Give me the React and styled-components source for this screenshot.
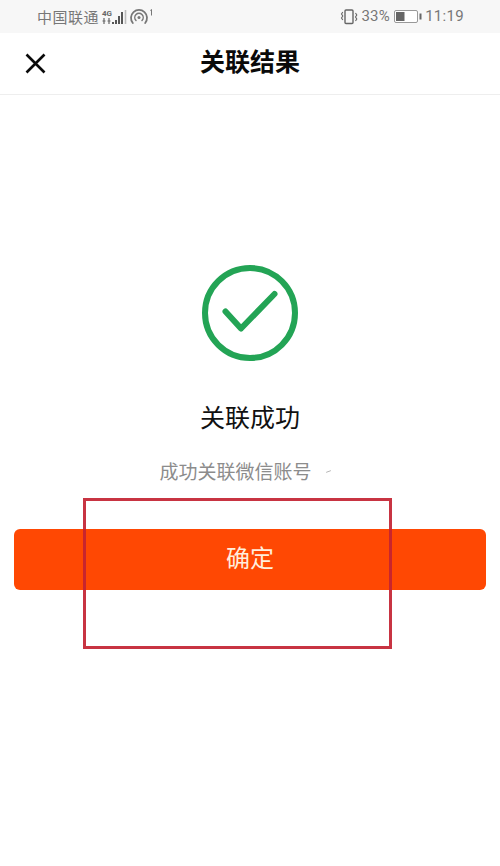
import React from "react";
import styled, { createGlobalStyle } from "styled-components";

const Global = createGlobalStyle`
  html, body { margin: 0; padding: 0; background: #fff; }
  body { font-family: "Noto Sans CJK SC", "Liberation Sans", sans-serif; }
`;

const Page = styled.div`
  position: relative;
  width: 500px;
  height: 866px;
  overflow: hidden;
  background: #fff;
  display: flex;
  flex-direction: column;
`;

const StatusBar = styled.div`
  height: 33px;
  background: #f7f7f7;
  display: flex;
  align-items: center;
  justify-content: space-between;
  padding: 0 36px 0 37px;
  color: #777;
  font-size: 15px;
`;

const StatusGroup = styled.div`
  display: flex;
  align-items: center;
  gap: ${(p) => p.$gap || 2}px;
`;

const Carrier = styled.span`
  line-height: 1;
  letter-spacing: 0.5px;
`;

const StatusText = styled.span`
  font-family: "Roboto", sans-serif;
  font-size: 15px;
  letter-spacing: 0.3px;
  line-height: 1;
  color: #777;
  margin-right: ${(p) => p.$after || 0}px;
`;

const NavBar = styled.div`
  height: 61px;
  display: grid;
  grid-template-columns: 70px 1fr 70px;
  align-items: center;
  border-bottom: 1px solid #eeeeee;
`;

const CloseButton = styled.div`
  display: flex;
  align-items: center;
  padding-left: 25px;
`;

const NavTitle = styled.div`
  text-align: center;
  font-size: 25px;
  font-weight: 700;
  color: #0a0a0a;
  line-height: 1;
  position: relative;
  top: -3px;
`;

const Content = styled.div`
  display: flex;
  flex-direction: column;
  align-items: center;
  padding-top: 169px;
`;

const ResultTitle = styled.div`
  margin-top: 37px;
  font-size: 25px;
  line-height: 34px;
  color: #111;
`;

const AccountRow = styled.div`
  margin-top: 25px;
  display: flex;
  align-items: center;
  font-size: 19px;
  line-height: 26px;
  color: #8c8c8c;
  gap: 14px;
  padding-right: 10px;
`;

const RedactedMark = styled.span`
  display: block;
  width: 5px;
  height: 1px;
  background: #aaa;
  transform: rotate(-20deg);
`;

const ConfirmButton = styled.button`
  margin: 45px 14px 0;
  align-self: stretch;
  height: 61px;
  border: none;
  border-radius: 6px;
  background: #ff4803;
  color: #ffeedd;
  font-family: inherit;
  font-size: 24px;
  padding: 0 0 7px;
`;

const Highlight = styled.div`
  position: absolute;
  left: 83px;
  top: 498px;
  width: 309px;
  height: 151px;
  box-sizing: border-box;
  border: 3px solid rgba(195, 35, 50, 0.92);
  pointer-events: none;
`;

const Signal = () => (
  <svg width="26" height="18" viewBox="0 0 26 18" fill="none">
    <text x="1" y="7.5" fontFamily="Roboto, sans-serif" fontSize="8" fontWeight="700" fill="#666">4G</text>
    <path d="M3 10v6M1.5 13h3M8 10v6M6.5 13h3" stroke="#666" strokeWidth="1.2" />
    <path d="M12 14v2M15 12v4M18 8v8M21 4v12" stroke="#555" strokeWidth="2" />
    <path d="M24.5 2v14" stroke="#bbb" strokeWidth="1.6" />
  </svg>
);

const Hotspot = () => (
  <svg width="25" height="18" viewBox="0 0 25 18" fill="none">
    <path d="M3.8 15a8 8 0 1 1 12.4 0" stroke="#777" strokeWidth="1.8" strokeLinecap="round" />
    <path d="M7 12.5a4.2 4.2 0 1 1 6 0" stroke="#777" strokeWidth="1.5" strokeLinecap="round" />
    <circle cx="10" cy="9.5" r="1.5" fill="#777" />
    <path d="M22.5 1.5v6M21.3 2.5l1.2-1" stroke="#777" strokeWidth="1" />
  </svg>
);

const Vibrate = () => (
  <svg width="18" height="16" viewBox="0 0 18 16" fill="none">
    <rect x="5" y="1" width="8" height="13.5" rx="1" stroke="#666" strokeWidth="1.4" />
    <path d="M2.8 3l-1.3 2 1.3 2-1.3 2 1.3 2" stroke="#666" strokeWidth="1.1" />
    <path d="M15.5 4l1.3 2-1.3 2 1.3 2-1.3 2" stroke="#666" strokeWidth="1.1" />
  </svg>
);

const Battery = () => (
  <svg width="28" height="13" viewBox="0 0 28 13" fill="none">
    <rect x="0.5" y="0.5" width="23" height="12" rx="1.5" fill="#fff" stroke="#999" />
    <rect x="2" y="2" width="8.5" height="9" fill="#666" />
    <rect x="25.5" y="3.5" width="2" height="6" fill="#666" />
  </svg>
);

const CloseIcon = () => (
  <svg width="21" height="21" viewBox="0 0 21 21" fill="none">
    <path d="M1.5 1.5l18 18M19.5 1.5l-18 18" stroke="#0a0a0a" strokeWidth="2.6" />
  </svg>
);

const CheckIcon = () => (
  <svg width="98" height="98" viewBox="0 0 98 98" fill="none">
    <circle cx="49" cy="49" r="45" stroke="#23a455" strokeWidth="6" />
    <path d="M24.5 47.5L40 64.5L73.5 30" stroke="#23a455" strokeWidth="6" strokeLinecap="round" strokeLinejoin="round" />
  </svg>
);

export default function App() {
  return (
    <>
      <Global />
      <Page>
        <StatusBar>
          <StatusGroup $gap={2}>
            <Carrier>中国联通</Carrier>
            <Signal />
            <Hotspot />
          </StatusGroup>
          <StatusGroup $gap={3}>
            <Vibrate />
            <StatusText $after={1}>33%</StatusText>
            <Battery />
            <StatusText>11:19</StatusText>
          </StatusGroup>
        </StatusBar>
        <NavBar>
          <CloseButton><CloseIcon /></CloseButton>
          <NavTitle>关联结果</NavTitle>
          <div />
        </NavBar>
        <Content>
          <CheckIcon />
          <ResultTitle>关联成功</ResultTitle>
          <AccountRow>
            <span>成功关联微信账号</span>
            <RedactedMark />
          </AccountRow>
          <ConfirmButton>确定</ConfirmButton>
        </Content>
        <Highlight />
      </Page>
    </>
  );
}
